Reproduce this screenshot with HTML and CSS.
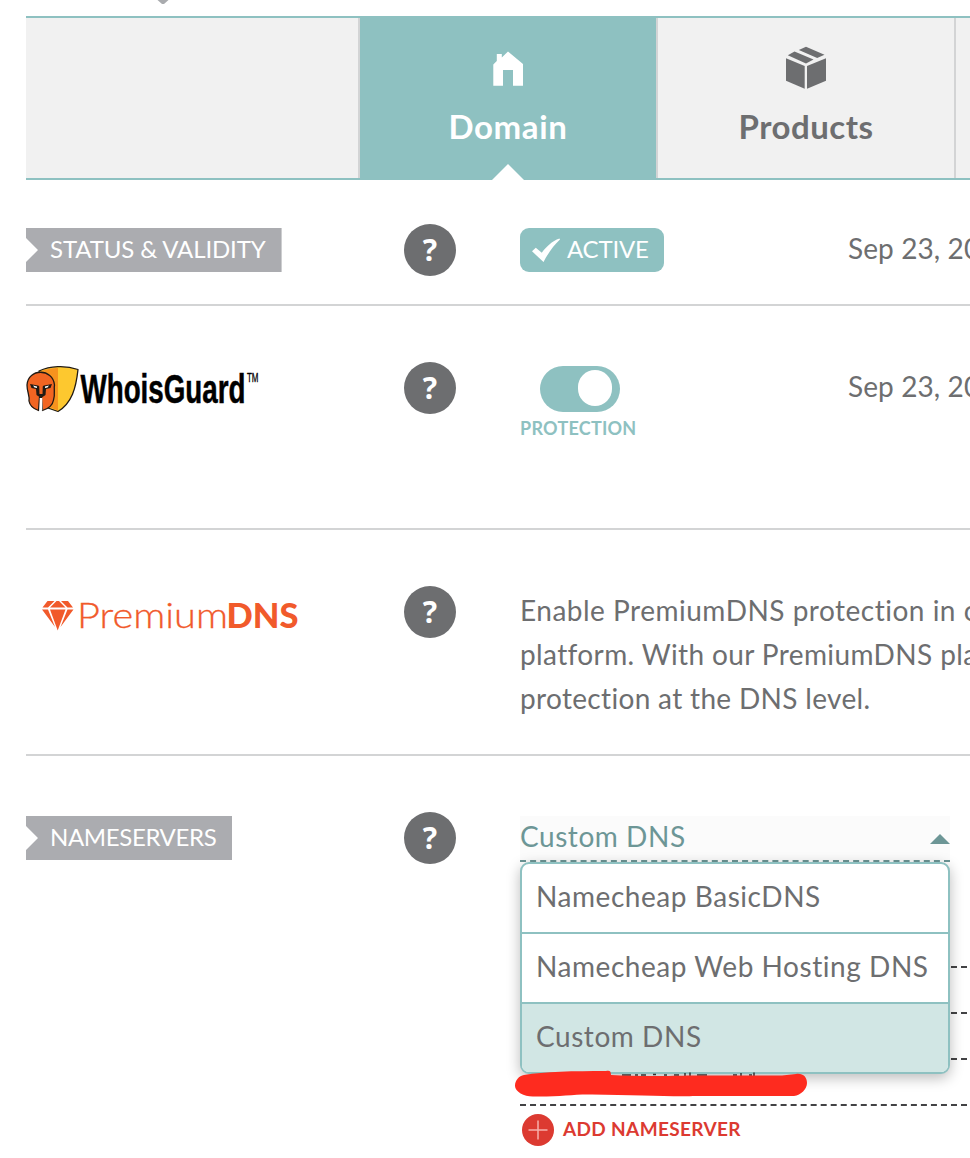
FILE: index.html
```html
<!DOCTYPE html>
<html lang="en">
<head>
<meta charset="utf-8">
<title>Domain details</title>
<link rel="stylesheet" href="styles.css">
</head>
<body>
<svg class="pointer" width="14" height="5" viewBox="0 0 14 5"><path d="M1.500 0h11L8 4H6z" fill="#a9abae"/></svg>
<nav class="tabs">
  <div class="tab tab-blank"></div>
  <div class="tab tab-active">
    <svg class="tab-icon" width="44" height="44" viewBox="0 0 44 44"><path fill="#fff" d="M7.300 19.500 10.800 16V9h5v3.500L22 6.500 37 19v21.700H27V25H17v15.700H7.300z"/></svg>
    <span class="tab-name name-domain">Domain</span>
    <svg class="notch" width="32" height="16" viewBox="0 0 32 16"><path d="M0 16 16 0l16 16z" fill="#fff"/></svg>
  </div>
  <div class="tab">
    <svg class="tab-icon" width="44" height="44" viewBox="0 0 44 44"><g fill="#6d6e70"><path d="M2 13.200 20.700 21v22.700L2 35.800z"/><path d="M23 21l19-7.800v22.600l-19 7.900z"/><path d="M3.800 10.200 10.500 6.500 29.500 14.500 22 18.500z"/><path d="M14.800 5 22 1.700 40.500 9.700 33.200 13z"/></g></svg>
    <span class="tab-name name-products">Products</span>
  </div>
  <div class="tab tab-rest"></div>
</nav>

<section class="row row-status">
  <div><span class="tag"><span class="tag-status">STATUS &amp; VALIDITY</span></span></div>
  <span class="help">?</span>
  <div class="content">
    <span class="badge"><svg width="28" height="24" viewBox="0 0 28 24"><path fill="#fff" d="M0 13.300 3.800 9.800 9.800 14.800C14 9 20 3 27.500.500L28 1.500C22 7 16.500 14.500 11.500 24z"/></svg><span class="badge-text">ACTIVE</span></span>
  </div>
  <span class="date">Sep 23, 20</span>
</section>

<section class="row row-whois">
  <svg class="whois-logo" width="236" height="52" viewBox="0 0 236 52">
    <g stroke="#211a14" stroke-width="1.300" stroke-linejoin="round">
      <path fill="#fdc82f" d="M13 6C24 1 39 0 52 4.500 50 23 46 38 32 46.500L19 42z"/>
      <path fill="#f7931e" stroke="none" d="M14 6.500Q22 3.200 32 3v42.500L20 41z"/>
      <path fill="#f26522" d="M1 20C2 3 27 3 28.500 20c-1 4 1 9-1 15-1 6-6 9-11 10.500l-1-13h-2l-1 13C8 44 4 42 3 36c1-5-2-9-2-16z"/>
    </g>
    <path fill="#211a14" d="M4 19 12 20.500 15 22l3-1.500 8-1.500-1.500 4-4.500 1-.500 6L15 33l-4.500-3-.500-6-4.500-1z"/>
    <path fill="#f26522" d="M13 15h4l-.500 14h-3z"/><path fill="#fff" d="M7 20.500l4 1v1.500l-2.500-.400zM23 20.500l-4 1v1.500l2.500-.400zM13.700 33h2.600v12.500h-2.600z"/>
    <text class="whois-name" x="54.500" y="37.500" textLength="165" lengthAdjust="spacingAndGlyphs">WhoisGuard</text>
    <text class="whois-tm" x="221" y="17" textLength="11.500" lengthAdjust="spacingAndGlyphs">TM</text>
  </svg>
  <span class="help">?</span>
  <div class="content protection">
    <span class="switch"><span class="knob"></span></span>
    <span class="switch-text">PROTECTION</span>
  </div>
  <span class="date">Sep 23, 20</span>
</section>

<section class="row row-premium">
  <svg class="premium-logo" width="276" height="50" viewBox="0 0 276 50">
    <g fill="#f15a2b"><path d="M21.500 15h7l-6.500 6.500h-5.500zM35 15h7l5 6.500h-5.500zM30.500 15h2.500l6.500 6.500h-15.500zM16 23.500h6l7 17.500zM24 23.500h15.500l-7.800 21zM41.500 23.500H47.500L34.500 41z"/></g>
    <text class="premium-light" x="51" y="41.500" textLength="151" lengthAdjust="spacingAndGlyphs">Premium</text>
    <text class="premium-bold" x="200.500" y="41.500" textLength="72" lengthAdjust="spacingAndGlyphs">DNS</text>
  </svg>
  <span class="help">?</span>
  <p class="copy"><span class="copy-a">Enable PremiumDNS protection in o</span><br><span class="copy-b">platform. With our PremiumDNS pla</span><br><span class="copy-c">protection at the DNS level.</span></p>
</section>

<section class="row row-servers">
  <div><span class="tag"><span class="tag-servers">NAMESERVERS</span></span></div>
  <span class="help">?</span>
  <div class="servers">
    <div class="select">
      <span>Custom DNS</span>
      <svg width="20" height="10" viewBox="0 0 20 10"><path d="M0 10 10 0l10 10z" fill="#6d9696"/></svg>
      <ul class="menu">
        <li>Namecheap BasicDNS</li>
        <li>Namecheap Web Hosting DNS</li>
        <li class="selected">Custom DNS</li>
      </ul>
    </div>
    <div class="fields"><div class="field"></div><div class="field"></div><div class="field"></div><div class="field">
      <svg class="marker" width="296" height="30" viewBox="0 0 296 30"><path d="M108 7h9M121 7h3M127 7h5M139 6.500h3M150 7h3M160 7h5M171 5v3M176 4.500v4M183 7h10M219 7h4M227 5v3M235 7h3M240 4.500v4" stroke="#333" stroke-width="1.500"/><path fill="#fe2b1f" d="M10 7C30 3.500 60 3 92 3c4-1 5 .5 5 4 25 1.500 60 1 80 .500h91l14-1.500c7-1 11 3 11 9s-6 12-13 13h-98c-20 1-60-1-104-1.500C60 26 45 29 20 28.500 11 29 1 24 1 18 1 12 5 8 10 7z"/></svg>
    </div></div>
    <div class="add"><svg width="32" height="32" viewBox="0 0 32 32"><circle cx="16" cy="16" r="16" fill="#dc3a31"/><path d="M6.500 16h19M16 6.500v19" stroke="#f6b0aa" stroke-width="1.500"/></svg><span class="add-text">ADD NAMESERVER</span></div>
  </div>
</section>
</body>
</html>
```

FILE: styles.css
```css
* { box-sizing: border-box; }
body {
  margin: 0;
  padding: 16px 0 0 26px;
  width: 970px;
  height: 1158px;
  overflow: hidden;
  position: relative;
  background: #fff;
  color: #6d6e70;
  font: 28px/44px Lato, sans-serif;
  font-variant-ligatures: none;
}
svg { display: block; flex: none; }
.pointer { position: absolute; left: 156px; top: 0; }

.tabs {
  display: grid;
  grid-template-columns: 334px 296px 300px 14px;
  height: 164px;
  border-top: 2px solid #8ec1c1;
  border-bottom: 2px solid #8ec1c1;
  background: #f1f1f1;
}
.tab { display: flex; flex-direction: column; align-items: center; padding-top: 27px; }
.tab-blank { border-right: 2px solid #d3d4d5; }
.tab:nth-child(3) { border-left: 2px solid #d3d4d5; border-right: 2px solid #d3d4d5; }
.tab-active { position: relative; background: #8ec1c1; color: #fff; }
.tab-name { margin-top: 16px; font-size: 33px; line-height: 43px; font-weight: 700; }
.name-domain { letter-spacing: .6px; }
.name-products { letter-spacing: .5px; }
.notch { position: absolute; left: 132px; bottom: -2px; }

.row {
  display: grid;
  grid-template-columns: 378px 52px 392px 1fr;
  border-bottom: 2px solid #d3d4d5;
  white-space: nowrap;
}
.row-status { height: 126px; padding-top: 44px; }
.row-whois { height: 224px; padding-top: 56px; }
.row-premium { height: 226px; padding-top: 56px; grid-template-columns: 378px 52px 1fr; }
.row-servers { height: 402px; padding-top: 56px; border: 0; grid-template-columns: 378px 52px 1fr; }
.tag {
  display: inline-block;
  height: 44px;
  margin-top: 4px;
  padding: 0 16px 0 24px;
  background: #abacb0;
  color: #fff;
  font-size: 24px;
  line-height: 42px;
  clip-path: polygon(0 0, 100% 0, 100% 100%, 0 100%, 0 34px, 12px 22px, 0 10px);
}
.tag, .tag span { vertical-align: top; }
.tag-status { letter-spacing: -.13px; }
.tag-servers { letter-spacing: -.37px; }
.help {
  width: 52px;
  height: 52px;
  border-radius: 50%;
  background: #6d6e70;
  color: #fff;
  font: 700 30px/52px "Noto Sans", sans-serif;
  text-align: center;
}
.content { padding-left: 64px; }
.badge {
  display: flex;
  align-items: center;
  width: 144px;
  height: 44px;
  margin-top: 4px;
  padding-left: 12px;
  gap: 7px;
  border-radius: 9px;
  background: #8ec1c1;
  color: #fff;
  font-size: 24px;
  letter-spacing: -.2px;
}
.badge-text { padding-bottom: 2px; }
.date { padding-top: 2px; letter-spacing: .1px; overflow: hidden; }
.protection { display: flex; flex-direction: column; padding-top: 4px; }
.switch { width: 80px; height: 46px; margin-left: 20px; padding: 4px 8px 0 38px; border-radius: 23px; background: #8ec1c1; }
.knob { display: block; width: 34px; height: 36px; border-radius: 17px; background: #fff; }
.switch-text { margin-top: 5px; font-size: 18px; line-height: 22px; font-weight: 700; letter-spacing: .25px; color: #8ec1c1; }
.whois-logo { margin-top: 3px; }
.whois-name { font: 700 40px "Liberation Sans", sans-serif; fill: #000; stroke: #000; stroke-width: .5px; }
.whois-tm { font: 12px "Liberation Sans", sans-serif; fill: #000; stroke: #000; stroke-width: .3px; }
.premium-light { font: 300 35px Lato, sans-serif; fill: #f15a2b; stroke: #f15a2b; stroke-width: .3px; }
.premium-bold { font: 900 35px Lato, sans-serif; fill: #f15a2b; }
.copy { margin: 2px 0 0; padding-left: 64px; overflow: hidden; }
.copy-a { letter-spacing: .5px; }
.copy-b { letter-spacing: .38px; }
.copy-c { letter-spacing: .33px; }

.servers { padding: 4px 0 0 64px; }
.select {
  position: relative;
  display: flex;
  justify-content: space-between;
  width: 430px;
  height: 46px;
  border-bottom: 2px dashed #6d9696;
  background: #fbfbfb;
  color: #6d9696;
  line-height: 41px;
  letter-spacing: .55px;
}
.select > svg { margin-top: 18px; }
.menu {
  position: absolute;
  z-index: 1;
  left: 0;
  top: 46px;
  width: 430px;
  height: 212px;
  margin: 0;
  padding: 0;
  overflow: hidden;
  list-style: none;
  border: 2px solid #8ec1c1;
  border-radius: 9px;
  background: #fff;
  box-shadow: 0 4px 14px rgba(0, 0, 0, .27);
  color: #6d6e70;
}
.menu li { height: 70px; padding-left: 14px; line-height: 65px; border-bottom: 2px solid #8ec1c1; }
.menu .selected { height: 68px; border: 0; background: #d1e6e4; }
.fields { padding-top: 60px; }
.field { position: relative; width: 447px; height: 46px; border-bottom: 2px dashed #434345; }
.marker { position: absolute; z-index: 2; left: -6px; top: 8px; }
.add { display: flex; align-items: center; gap: 9px; margin: 8px 0 0 2px; height: 32px; color: #dc3a31; font-size: 19px; font-weight: 700; letter-spacing: .35px; }
.add-text { padding-bottom: 2px; }
```
